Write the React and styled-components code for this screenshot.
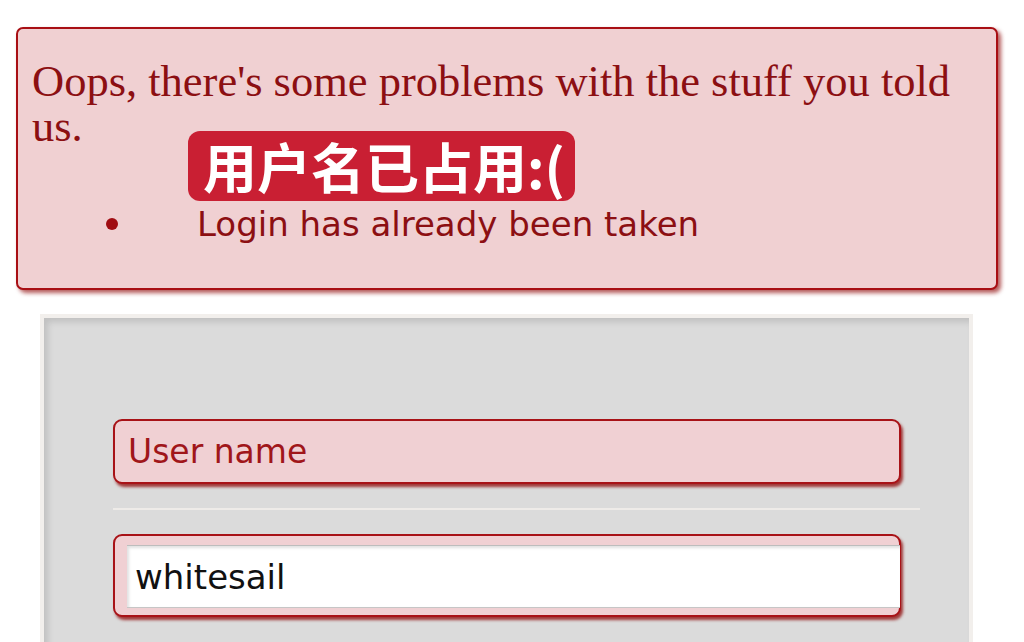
import React from 'react';
import styled, { createGlobalStyle } from 'styled-components';

const GlobalStyle = createGlobalStyle`
  html, body {
    margin: 0;
    padding: 0;
    background: #ffffff;
    overflow: hidden;
  }
  * {
    box-sizing: border-box;
  }
`;

const Page = styled.div`
  padding: 27px 0 0 16px;
  width: 1024px;
  height: 642px;
`;

const ErrorBox = styled.div`
  width: 982px;
  padding: 30px 14px 44px 14px;
  background: #f0d0d2;
  border: 2px solid #a80f14;
  border-radius: 7px;
  box-shadow: 3px 3px 4px rgba(140, 0, 0, 0.65);
  color: #8c0f12;
`;

const Lead = styled.p`
  margin: 0;
  max-width: 935px;
  font-family: "Liberation Serif", "DejaVu Serif", serif;
  font-size: 44.5px;
  line-height: 45px;
`;

const Badge = styled.div`
  width: fit-content;
  height: 70px;
  margin: -18px 0 0 156px;
  padding: 0 10px 0 15px;
  background: #c91f33;
  border-radius: 12px;
  color: #ffffff;
  font-family: "Noto Sans CJK SC", "Noto Sans", sans-serif;
  font-weight: 700;
  font-size: 54px;
  line-height: 70px;
`;

const List = styled.ul`
  list-style: none;
  margin: 3px 0 0 0;
  padding: 0;
`;

const Item = styled.li`
  display: flex;
  align-items: center;
  gap: 79px;
  padding-left: 74px;
  font-family: "DejaVu Sans", "Liberation Sans", sans-serif;
  font-size: 34px;
  line-height: 40px;
`;

const Dot = styled.span`
  width: 12px;
  height: 12px;
  border-radius: 50%;
  background: #a00d12;
  flex: none;
`;

const Panel = styled.div`
  margin: 24px 0 0 24px;
  width: 933px;
  height: 360px;
  padding: 101px 0 0 69px;
  background: #dbdbdb;
  border: 4px solid #f2efec;
  box-shadow: inset 4px 4px 6px rgba(0, 0, 0, 0.12);
`;

const Field = styled.div`
  width: 788px;
  height: ${p => p.$height}px;
  padding: ${p => p.$pad};
  background: #f0d0d3;
  border: 2px solid #a81217;
  border-radius: 9px;
  box-shadow: 2px 3px 3px rgba(140, 0, 0, 0.75);
`;

const Label = styled.div`
  font-family: "DejaVu Sans", "Liberation Sans", sans-serif;
  font-size: 33px;
  line-height: 61px;
  color: #a0161a;
`;

const Divider = styled.div`
  width: 807px;
  height: 2px;
  margin: 24px 0;
  background: #eeebe8;
`;

const Input = styled.input`
  display: block;
  width: 773px;
  height: 63px;
  margin: 0;
  padding: 0 8px;
  border: none;
  border-top: 1px solid #bdbdbd;
  border-bottom: 1px solid #c6c6c6;
  background: #ffffff;
  box-shadow: inset 2px 2px 3px rgba(0, 0, 0, 0.12);
  font-family: "DejaVu Sans", "Liberation Sans", sans-serif;
  font-size: 34px;
  color: #111111;
  outline: none;
`;

export default function App() {
  return (
    <Page>
      <GlobalStyle />
      <ErrorBox>
        <Lead>Oops, there's some problems with the stuff you told us.</Lead>
        <Badge>用户名已占用:(</Badge>
        <List>
          <Item>
            <Dot />
            Login has already been taken
          </Item>
        </List>
      </ErrorBox>
      <Panel>
        <Field $height={65} $pad="0 0 0 13px">
          <Label>User name</Label>
        </Field>
        <Divider />
        <Field $height={83} $pad="9px 0 0 12px">
          <Input defaultValue="whitesail" />
        </Field>
      </Panel>
    </Page>
  );
}
